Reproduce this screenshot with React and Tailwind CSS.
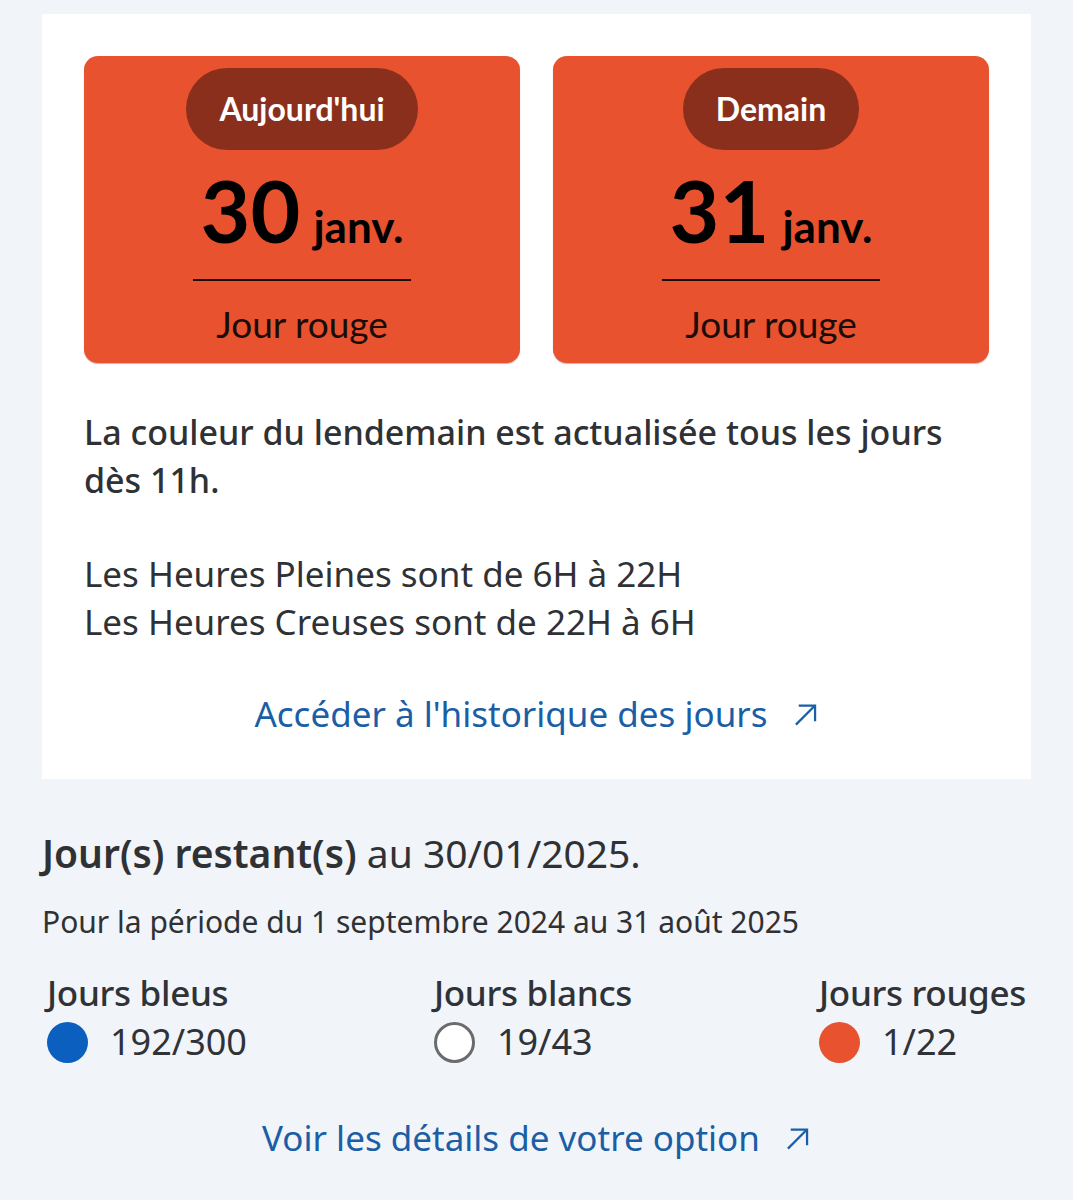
import React from "react";

function Arrow() {
  return (
    <svg width="27" height="27" viewBox="0 0 24 24" fill="none" stroke="currentColor" strokeWidth="2" strokeLinecap="butt" className="shrink-0">
      <path d="M3.5 21 L20 4.5" />
      <path d="M6 4 H20.5 V18" />
    </svg>
  );
}

function DayCard({ label, day }) {
  return (
    <div className="flex flex-col items-center rounded-[14px] bg-[#e8522f] pt-[12px] pb-[18px] shadow-[0_1px_1px_rgba(120,30,10,0.35)]" style={{ fontFamily: "Lato, 'Noto Sans', sans-serif" }}>
      <div className="rounded-full bg-[#8b2f1d] px-[33px] py-[22px] text-[32px] font-bold leading-[38px] text-white">
        {label}
      </div>
      <div className="mt-[17px] flex items-baseline text-black">
        <span className="text-[86px] font-bold leading-[86px]">{day}</span>
        <span className="ml-[13px] text-[44px] font-bold leading-[44px]">janv.</span>
      </div>
      <div className="mt-[26px] h-[2px] w-[218px] bg-[#1a0a05]" />
      <div className="mt-[22px] text-[37px] leading-[42px] text-[#1a0c08]">Jour rouge</div>
    </div>
  );
}

function Stat({ title, value, dot }) {
  return (
    <div className="flex flex-col">
      <div className="text-[35px] font-medium leading-[44px] text-[#2f3237] tracking-[-0.3px]">{title}</div>
      <div className="mt-[5px] flex items-center gap-[22px]">
        {dot}
        <span className="text-[36px] leading-[44px] text-[#2f3237]">{value}</span>
      </div>
    </div>
  );
}

export default function App() {
  return (
    <div className="min-h-[1200px] bg-[#f1f4f9] px-[42px] pt-[14px] text-[#2f3134]" style={{ fontFamily: "'Noto Sans', sans-serif" }}>
      <div className="bg-white px-[42px] pt-[42px] pb-[41px]">
        <div className="grid grid-cols-2 gap-[33px]">
          <DayCard label="Aujourd'hui" day="30" />
          <DayCard label="Demain" day="31" />
        </div>
        <p className="mt-[45px] text-[34px] font-medium leading-[48px] text-[#2f3134]">
          La couleur du lendemain est actualisée tous les jours dès 11h.
        </p>
        <div className="mt-[46px] text-[35px] leading-[48px] text-[#2f3134]">
          <div>Les Heures Pleines sont de 6H à 22H</div>
          <div>Les Heures Creuses sont de 22H à 6H</div>
        </div>
        <div className="mt-[44px] flex items-center justify-center text-[35px] leading-[48px] text-[#1a5ea6]">
          <span>Accéder à l'historique des jours</span>
          <span className="ml-[24px] flex"><Arrow /></span>
        </div>
      </div>

      <div className="mt-[48px]">
        <div className="text-[39px] leading-[52px] text-[#2f3134]">
          <span className="font-semibold">Jour(s) restant(s)</span> au 30/01/2025.
        </div>
        <div className="mt-[25px] text-[30px] leading-[36px] text-[#2f3134]">
          Pour la période du 1 septembre 2024 au 31 août 2025
        </div>
        <div className="mt-[31px] flex justify-between px-[5px]">
          <Stat title="Jours bleus" value="192/300" dot={<span className="block h-[41px] w-[41px] rounded-full bg-[#0b5fbf]" />} />
          <Stat title="Jours blancs" value="19/43" dot={<span className="block h-[41px] w-[41px] rounded-full border-[3px] border-[#6b6b6b] bg-white" />} />
          <Stat title="Jours rouges" value="1/22" dot={<span className="block h-[41px] w-[41px] rounded-full bg-[#e8522f]" />} />
        </div>
        <div className="mt-[50px] flex items-center justify-center text-[35px] leading-[48px] text-[#1a5ea6]">
          <span>Voir les détails de votre option</span>
          <span className="ml-[24px] flex"><Arrow /></span>
        </div>
      </div>
    </div>
  );
}
